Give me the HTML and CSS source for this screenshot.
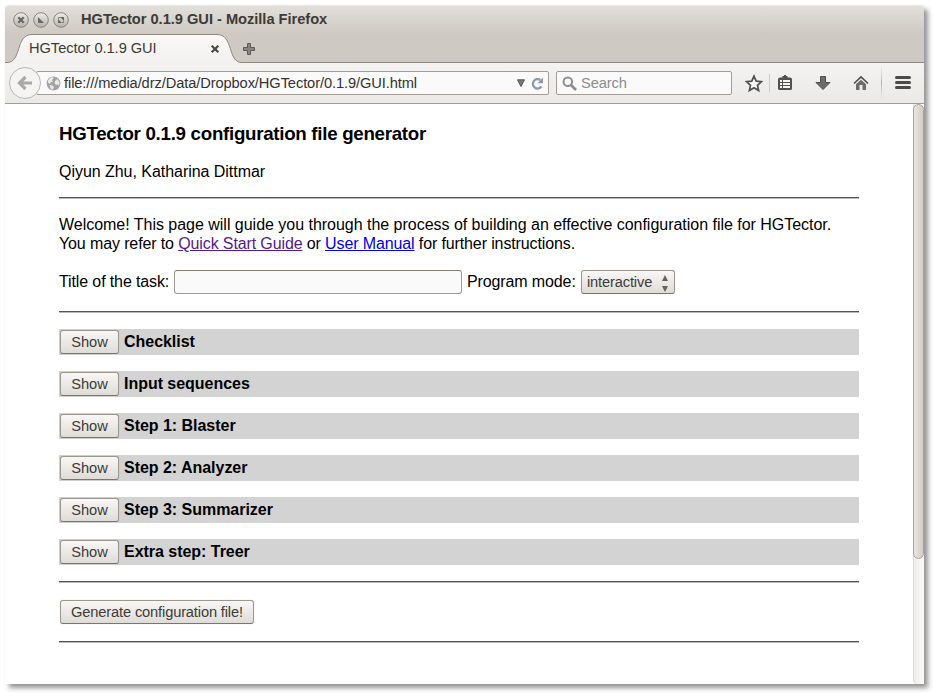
FILE: index.html
```
<!DOCTYPE html>
<html lang="en">
<head>
<meta charset="utf-8">
<title>HGTector 0.1.9 GUI</title>
<link rel="stylesheet" href="styles.css">
</head>
<body>
<div class="window">
  <header class="titlebar">
    <svg class="controls" width="58" height="18" viewBox="0 0 58 18">
      <defs><linearGradient id="ball" x1="0" y1="0" x2="0" y2="1"><stop offset="0" stop-color="#efeeec"/><stop offset="1" stop-color="#b5b0a8"/></linearGradient></defs>
      <g fill="url(#ball)" stroke="#89857d"><circle cx="9" cy="9" r="7.3"/><circle cx="29" cy="9" r="7.3"/><circle cx="49" cy="9" r="7.3"/></g>
      <path d="M6.3 6.3l5.4 5.4M11.7 6.3l-5.4 5.4" stroke="#6b6761" stroke-width="2.3"/>
      <path d="M26 6v6h6z" fill="#6b6761"/>
      <path d="M48 6h4v4zM46 8v4h4z" fill="#6b6761"/><path d="M46.5 8.5v-2h2M51.5 9.5v2h-2" fill="none" stroke="#85817a"/>
    </svg>
    <span class="window-title">HGTector 0.1.9 GUI - Mozilla Firefox</span>
  </header>
  <div class="tabs">
    <svg class="tab-shape" width="240" height="30" viewBox="0 0 240 30">
      <defs><linearGradient id="tab" x1="0" y1="0" x2="0" y2="1"><stop offset="0" stop-color="#faf9f8"/><stop offset="1" stop-color="#f2f1ef"/></linearGradient></defs>
      <path d="M0 28.500H2C17 28.500 10 .500 27 .500H212C229 .500 222 28.500 237 28.500H240V30H0z" fill="url(#tab)"/>
      <path d="M0 28.500H2C17 28.500 10 .500 27 .500H212C229 .500 222 28.500 237 28.500H240" fill="none" stroke="#8f8a80"/>
    </svg>
    <span class="tab-title">HGTector 0.1.9 GUI</span>
    <svg class="tab-close" width="10" height="10" viewBox="0 0 10 10"><path d="M1.700 1.700l6.600 6.600M8.300 1.700l-6.600 6.600" stroke="#4b4945" stroke-width="2.200"/></svg>
    <svg class="tab-new" width="12" height="12" viewBox="0 0 12 12"><path d="M4.500 .500h3v4h4v3h-4v4h-3v-4h-4v-3h4z" fill="#89857f" stroke="#5c5954"/></svg>
  </div>
  <nav class="toolbar">
    <div class="back"><svg width="16" height="16" viewBox="0 0 16 16"><path d="M15 8H3M8.500 2L2.500 8l6 6" fill="none" stroke="#aaa9a7" stroke-width="3.200"/></svg></div>
    <div class="address">
      <svg width="15" height="15" viewBox="0 0 15 15"><circle cx="7.500" cy="7.500" r="6.900" fill="#a2a2a2"/><path d="M2 4.500L4 2l3-1 .5 1.500L6 4l1 1.500-2 .5-1 2-2-1.500zM9 5l2.500-2 2 3.500-.5 3-1.500-1L10 9 8.500 7zM3.500 9l3 .5L8 11l-1.500 3-2-1.500z" fill="#e9e9e9"/></svg>
      <span class="url">file:///media/drz/Data/Dropbox/HGTector/0.1.9/GUI.html</span>
      <svg class="drop" width="8" height="8" viewBox="0 0 8 8"><path d="M.500 .800h7L4 7.500z" fill="#777" stroke="#5b5b5b"/></svg>
      <svg class="reload" width="13" height="13" viewBox="0 0 13 13"><path d="M10.500 9.500A4.700 4.700 0 1 1 9.300 3" fill="none" stroke="#8b9bad" stroke-width="2.300"/><path d="M12 .500v5.700H6.500z" fill="#8b9bad"/></svg>
    </div>
    <div class="search">
      <svg width="15" height="15" viewBox="0 0 15 15"><circle cx="5.800" cy="5.800" r="4.300" fill="none" stroke="#8e8e8e" stroke-width="2"/><path d="M9 9l5 5" stroke="#8e8e8e" stroke-width="2.600"/></svg>
      <span>Search</span>
    </div>
    <svg class="tools" width="192" height="40" viewBox="0 0 192 40">
      <defs><linearGradient id="line" x1="0" y1="0" x2="0" y2="1"><stop offset="0" stop-color="#b9c2cb" stop-opacity="0"/><stop offset=".5" stop-color="#aab4bf"/><stop offset="1" stop-color="#b9c2cb" stop-opacity="0"/></linearGradient></defs>
      <path d="M22 13.200l2.200 4.900 5.200.6-3.900 3.600 1.100 5.200-4.600-2.700-4.600 2.700 1.100-5.200-3.900-3.600 5.200-.6z" fill="#fafafa" stroke="#52514f" stroke-width="1.700"/>
      <path d="M37.500 11v18" stroke="#c9ced4"/>
      <path d="M48 14.500h2.500v-1.500h1.500v-1h2v1h1.500v1.500H58q2 0 2 2v9q0 1.500-1.500 1.500h-11q-1.500 0-1.500-1.500v-9q0-2 2-2z" fill="#52514f"/>
      <path d="M48 18h2M51 18h7M48 21h2M51 21h7M48 24h2M51 24h7" stroke="#f6f6f5" stroke-width="1.800"/>
      <path d="M88.500 13.500h5v6h4.500l-7 7-7-7h4.500z" fill="#6d6c6a" stroke="#4f4e4c"/>
      <path d="M122 20.500l7-6.500 7 6.500" fill="none" stroke="#52514f" stroke-width="1.700"/>
      <path d="M124 21.200l5-4.500 5 4.500V27h-3.500v-5h-3v5H124z" fill="#6d6c6a"/>
      <rect x="149" y="2" width="1" height="35" fill="url(#line)"/>
      <path d="M164.500 14.500h13M164.500 19.500h13M164.500 24.500h13" stroke="#4b4a48" stroke-width="3" stroke-linecap="round"/>
    </svg>
  </nav>
  <div class="viewport">
    <main class="page">
      <h3>HGTector 0.1.9 configuration file generator</h3>
      <p class="authors">Qiyun Zhu, Katharina Dittmar</p>
      <hr>
      <p class="intro">Welcome! This page will guide you through the process of building an effective configuration file for HGTector.<br><span class="guides">You may refer to <a class="visited" href="#">Quick Start Guide</a> or <a href="#">User Manual</a> for further instructions.</span></p>
      <div class="form-row">
        <label for="task">Title of the task:</label><input id="task" type="text">
        <span class="mode-label">Program mode:</span>
        <button class="mode" type="button"><span>interactive</span><svg width="6" height="18" viewBox="0 0 6 18"><path d="M0 7L3 1l3 6zM0 12l3 6 3-6z" fill="#66635e"/></svg></button>
      </div>
      <hr>
      <section><button type="button">Show</button><b>Checklist</b></section>
      <section><button type="button">Show</button><b>Input sequences</b></section>
      <section><button type="button">Show</button><b>Step 1: Blaster</b></section>
      <section><button type="button">Show</button><b>Step 2: Analyzer</b></section>
      <section><button type="button">Show</button><b>Step 3: Summarizer</b></section>
      <section><button type="button">Show</button><b>Extra step: Treer</b></section>
      <hr class="after-sections">
      <div class="generate"><button type="button">Generate configuration file!</button></div>
      <hr>
    </main>
    <div class="scrollbar"><div class="thumb"></div></div>
  </div>
</div>
</body>
</html>
```
FILE: styles.css
```
* { box-sizing: border-box; }
body {
  margin: 0;
  padding: 5px;
  height: 693px;
  overflow: hidden;
  background: #fff;
  font: 16px/19px "Liberation Sans", sans-serif;
  color: #000;
}
svg { display: block; flex: none; }
.window {
  width: 919px;
  height: 679px;
  display: flex;
  flex-direction: column;
  border-radius: 4px 4px 0 0;
  box-shadow: 4px 4px 5px rgba(0, 0, 0, .42), 0 0 1px rgba(0, 0, 0, .15);
  background: #fff;
}
.titlebar {
  height: 29px;
  display: flex;
  align-items: center;
  padding: 0 0 1px 7px;
  border-radius: 4px 4px 0 0;
  border-top: 1px solid #ebe9e6;
  background: linear-gradient(#e2dfdb, #cec9c2);
}
.window-title {
  margin-left: 11px;
  font-size: 14.67px;
  letter-spacing: -.03px;
  font-weight: bold;
  color: #3c3b37;
  white-space: nowrap;
}
.tabs {
  height: 29px;
  position: relative;
  display: flex;
  align-items: center;
  padding-left: 24px;
  background: #cec9c2;
  border-bottom: 1px solid #8f8a80;
  font-size: 14.67px;
  color: #3c3b37;
}
.tab-shape { position: absolute; left: 0; top: 0; }
.tab-title { position: relative; width: 181px; padding-top: 1px; letter-spacing: -.06px; white-space: nowrap; }
.tab-close { position: relative; margin-top: 1px; }
.tab-new { margin-left: 23px; position: relative; top: 1px; }
.toolbar {
  height: 41px;
  display: flex;
  align-items: center;
  padding-left: 4px;
  border-bottom: 1px solid #a39e95;
  background: linear-gradient(#f4f3f1, #ebe9e6);
}
.back {
  position: relative;
  z-index: 1;
  width: 32px;
  height: 32px;
  flex: none;
  display: grid;
  place-items: center;
  border: 1px solid #b2b6bd;
  border-radius: 50%;
  background: #f5f4f3;
}
.address, .search {
  height: 24px;
  flex: none;
  display: flex;
  align-items: center;
  border: 1px solid #a39e95;
  border-radius: 2px;
  background: #fafafa;
  font-size: 14.67px;
  color: #333;
}
.address { width: 513px; margin-left: -5px; padding-left: 9px; }
.url { width: 453px; margin-left: 3px; letter-spacing: -.1px; white-space: nowrap; }
.reload { margin-left: 6px; }
.search { width: 176px; margin-left: 7px; padding-left: 5px; color: #8c8c8c; }
.search span { margin-left: 4px; letter-spacing: -.1px; }
.viewport { flex: 1; display: flex; justify-content: space-between; min-height: 0; }
.page { width: 800px; margin-left: 54px; }
h3 { margin: 0; padding-top: 19px; font-size: 18.72px; line-height: 22px; letter-spacing: -.28px; }
.authors { margin: 17px 0 16px; line-height: 19px; letter-spacing: -.04px; }
hr {
  height: 2px;
  margin: 0;
  border: 0;
  border-top: 1px solid #555;
  border-bottom: 1px solid #b9b9b9;
}
.intro { margin: 16px 0 0; letter-spacing: -.022px; white-space: nowrap; }
.guides { letter-spacing: -.12px; }
a { color: #0000ee; }
a.visited { color: #551a8b; }
.form-row { height: 24px; margin: 17px 0; display: flex; align-items: center; white-space: nowrap; letter-spacing: -.12px; }
.form-row label { width: 115px; padding-bottom: 2px; }
input {
  width: 288px;
  height: 24px;
  border: 1px solid #a09b90;
  border-top-color: #857e70;
  border-radius: 3px;
  background: #fafafa;
}
.mode-label { width: 114px; margin-left: 5px; padding-bottom: 2px; }
button {
  height: 24px;
  padding: 0;
  flex: none;
  border: 1px solid #9d978d;
  border-bottom-color: #7b756c;
  border-radius: 3px;
  background: linear-gradient(#f8f7f6, #dfdcd7);
  box-shadow: 0 0 1px rgba(0, 0, 0, .25);
  font: 14.67px/18px "Liberation Sans", sans-serif;
  letter-spacing: -.15px;
  color: #3c3b37;
}
.mode { width: 94px; display: flex; align-items: center; justify-content: space-between; padding: 0 6px 0 5px; }
.mode svg { margin-top: 2px; }
section {
  height: 26px;
  margin: 16px 0;
  padding: 0 1px;
  display: flex;
  align-items: center;
  background: #d3d3d3;
}
section button { width: 59px; letter-spacing: -.05px; }
section b { margin-left: 5px; line-height: 20px; letter-spacing: -.03px; }
.after-sections { margin-top: 16px; }
.generate { height: 58px; padding: 17px 1px 0; }
.generate button { width: 194px; display: block; }
.scrollbar {
  width: 11px;
  background: linear-gradient(90deg, #efedeb, #fbfaf9);
  border-left: 1px solid #dedbd7;
  border-radius: 0 0 4px 4px;
}
.thumb {
  width: 11px;
  height: 455px;
  margin-left: -1px;
  border: 1px solid #aaa399;
  border-radius: 6px;
  background: linear-gradient(90deg, #e9e7e2, #d1ccc3);
}
```
